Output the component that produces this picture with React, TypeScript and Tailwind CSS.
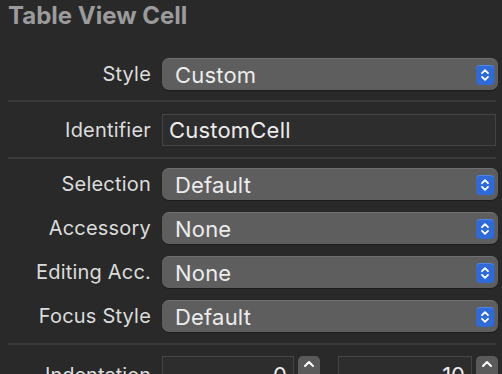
import React from "react";

const font = { fontFamily: "Inter, 'Noto Sans', sans-serif" };

const Chevrons = () => (
  <svg width="10" height="14" viewBox="0 0 10 14" fill="none">
    <path d="M2 5.2 L5 2.2 L8 5.2" stroke="white" strokeWidth="1.8" strokeLinecap="round" strokeLinejoin="round" />
    <path d="M2 8.8 L5 11.8 L8 8.8" stroke="white" strokeWidth="1.8" strokeLinecap="round" strokeLinejoin="round" />
  </svg>
);

const Popup = ({ label, value }: { label: string; value: string }) => (
  <div className="flex items-center h-[32px]">
    <div className="w-[143px] shrink-0 text-right text-[20px] text-[#dcdcdc] tracking-[0.2px]">{label}</div>
    <div className="ml-[11px] w-[336px] shrink-0 h-[32px] rounded-[7px] bg-[#5e5e5e] border-t border-[#707070] shadow-[0_1px_1px_rgba(0,0,0,0.35)] flex items-center justify-between pl-[13px] pr-[4px]">
      <span className="text-[22px] text-[#ececec] leading-none tracking-[0.2px]">{value}</span>
      <div className="w-[18px] h-[20px] rounded-[4px] bg-[#2f6bd8] border-t border-[#4c86ea] flex items-center justify-center">
        <Chevrons />
      </div>
    </div>
  </div>
);

const Sep = () => <div className="h-[2px] w-[488px] bg-[#3a3a3a]" />;

const Stepper = () => (
  <div className="w-[22px] h-[24px] rounded-t-[5px] bg-[#5a5a5a] flex justify-center pt-[4px]">
    <svg width="12" height="8" viewBox="0 0 12 8" fill="none">
      <path d="M2 6 L6 2 L10 6" stroke="white" strokeWidth="2" strokeLinecap="round" strokeLinejoin="round" />
    </svg>
  </div>
);

export default function App() {
  return (
    <div className="w-[502px] h-[374px] bg-[#292929] overflow-hidden px-2" style={font}>
      {/* Title */}
      <div className="h-[36px] pt-[1px] text-[24px] font-bold text-[#9b9b9b] leading-[30px]">Table View Cell</div>

      <div className="pt-[22px] pb-[10px]">
        <Popup label="Style" value="Custom" />
      </div>
      <Sep />

      <div className="flex items-center pt-[12px] pb-[11px]">
        <div className="w-[143px] shrink-0 text-right text-[20px] text-[#dcdcdc] tracking-[0.2px]">Identifier</div>
        <div className="ml-[11px] w-[334px] shrink-0 h-[32px] bg-[#2d2d2d] border border-[#444] flex items-center pl-[6px]">
          <span className="text-[22px] text-[#ececec] tracking-[0.2px]">CustomCell</span>
        </div>
      </div>
      <Sep />

      <div className="flex flex-col gap-[12px] pt-[9px] pb-[11px]">
        <Popup label="Selection" value="Default" />
        <Popup label="Accessory" value="None" />
        <Popup label="Editing Acc." value="None" />
        <Popup label="Focus Style" value="Default" />
      </div>
      <Sep />

      <div className="flex items-start pt-[11px]">
        <div className="w-[143px] shrink-0 text-right text-[20px] text-[#dcdcdc] pt-[4px]">Indentation</div>
        <div className="ml-[11px] w-[132px] shrink-0 h-[30px] bg-[#2d2d2d] border border-[#444] text-right pr-[6px] text-[22px] text-[#ececec] pt-[2px]">0</div>
        <div className="ml-[4px] shrink-0"><Stepper /></div>
        <div className="ml-[18px] w-[134px] shrink-0 h-[30px] bg-[#2d2d2d] border border-[#444] text-right pr-[6px] text-[22px] text-[#ececec] pt-[2px]">10</div>
        <div className="ml-[4px] shrink-0"><Stepper /></div>
      </div>
    </div>
  );
}
